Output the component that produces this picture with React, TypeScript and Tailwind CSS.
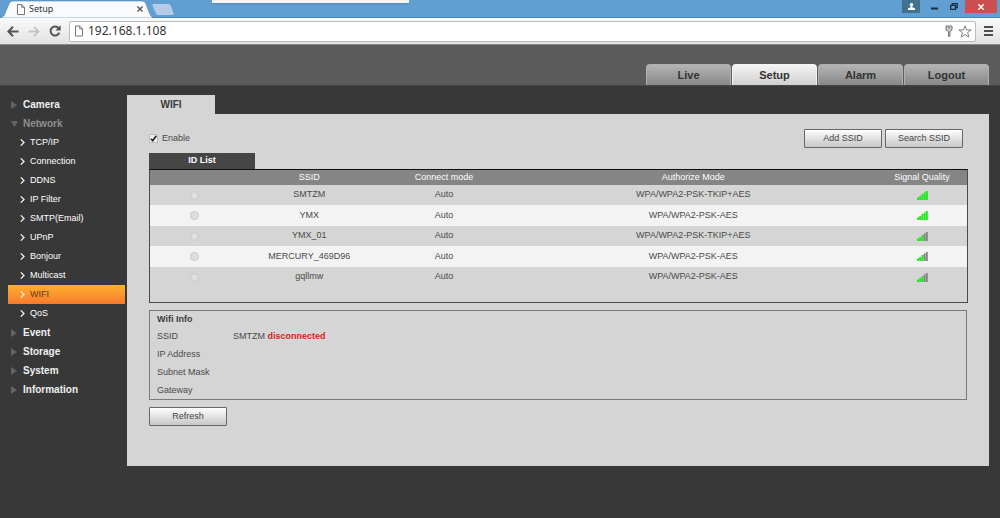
import { useState } from 'react';

const networkItems = ['TCP/IP', 'Connection', 'DDNS', 'IP Filter', 'SMTP(Email)', 'UPnP', 'Bonjour', 'Multicast', 'WIFI', 'QoS'];

const accessPoints = [
  { ssid: 'SMTZM', mode: 'Auto', auth: 'WPA/WPA2-PSK-TKIP+AES', signal: 5 },
  { ssid: 'YMX', mode: 'Auto', auth: 'WPA/WPA2-PSK-AES', signal: 5 },
  { ssid: 'YMX_01', mode: 'Auto', auth: 'WPA/WPA2-PSK-TKIP+AES', signal: 3 },
  { ssid: 'MERCURY_469D96', mode: 'Auto', auth: 'WPA/WPA2-PSK-AES', signal: 3 },
  { ssid: 'gqllmw', mode: 'Auto', auth: 'WPA/WPA2-PSK-AES', signal: 3 },
];

const PageIcon = ({ className }: { className: string }) => (
  <svg className={className} viewBox="0 0 8 11" fill="#fff" stroke="#777" strokeWidth="1">
    <path d="M.5.5h4.2l2.8 2.8v7.2h-7z" />
    <path d="M4.7.5v2.8h2.8" fill="none" />
  </svg>
);

const SignalBars = ({ level }: { level: number }) => (
  <svg className="mx-auto h-[9px] w-[11px]" viewBox="0 0 11 9" role="img" aria-label={`${level} of 5`}>
    {[2.5, 4, 6, 7.5, 9].map((h, i) => (
      <rect key={i} x={i * 2.2} y={9 - h} width="2" height={h} fill={i < level ? '#1fe81f' : '#858585'} />
    ))}
  </svg>
);

const BrowserChrome = () => (
  <div className="font-['Noto_Sans',sans-serif]">
    <div className="relative flex h-[18px] items-start justify-between border-b border-[#4d86b5] bg-[#619fd2]">
      <div className="flex h-[18px]">
        <div className="relative flex h-[18px] w-[152px] items-center pl-[17px]">
          <svg className="absolute inset-0 h-[18px] w-[153px]" viewBox="0 0 153 18">
            <path d="M0 18C4 17 5 14 6 11L9 4Q10 1 13 1H142Q145 1 146 4L149 12Q151 17 153 18Z" fill="#f9fafc" stroke="#4f86b3" strokeWidth=".6" />
          </svg>
          <PageIcon className="relative h-[11px] w-[8px]" />
          <span className="relative ml-1 flex-1 text-[9px] leading-[18px] text-[#333]">Setup</span>
          <button aria-label="Close tab" className="relative mr-[9px]">
            <svg className="h-[6px] w-[6px]" viewBox="0 0 6 6" stroke="#555" strokeWidth="1.4">
              <path d="M.5.5l5 5M5.5.5l-5 5" />
            </svg>
          </button>
        </div>
        <button aria-label="New tab" className="mt-1 h-[11px]">
          <svg className="h-[11px] w-[22px]" viewBox="0 0 22 11">
            <path d="M1.5 0H16Q18 0 19 2L21.5 9.5Q22 11 20.5 11H6.5Q4.5 11 4 9.5L.5 1.5Q0 0 1.5 0Z" fill="#b5cce6" />
          </svg>
        </button>
      </div>
      <div className="absolute left-[212px] top-0 h-[3px] w-[197px] bg-[#f4f4f4] shadow-sm" />
      <div className="flex h-[13px] items-start pr-[3px]">
        <button aria-label="Profile" className="flex h-[13px] w-[18px] items-center justify-center bg-[#42708f]">
          <svg className="h-[7px] w-[7px]" viewBox="0 0 7 7" fill="#fff">
            <circle cx="3.5" cy="1.8" r="1.8" />
            <path d="M2.8 3h1.4v1.3L7 5.3V7H0V5.3l2.8-1z" />
          </svg>
        </button>
        <button aria-label="Minimize" className="ml-[11px] pt-[7px]">
          <svg className="h-[3px] w-[7px]" viewBox="0 0 7 3"><path d="M0 .5h7v2H0z" fill="#142f45" /></svg>
        </button>
        <button aria-label="Restore" className="ml-3 pt-[3px]">
          <svg className="h-[7px] w-[8px]" viewBox="0 0 8 7" fill="none" stroke="#142f45" strokeWidth="1.3">
            <path d="M.7 2.3h4.8v4H.7zM2.3 2V.7h5v4H6" />
          </svg>
        </button>
        <button aria-label="Close" className="ml-[7px] flex h-[13px] w-[32px] items-center justify-center bg-[#cb4f50]">
          <svg className="h-[6px] w-[6px]" viewBox="0 0 6 6" stroke="#fff" strokeWidth="1.5"><path d="M.3.3l5.4 5.4M5.7.3L.3 5.7" /></svg>
        </button>
      </div>
    </div>
    <div className="flex h-[27px] items-center border-b border-[#8a8a8a] bg-linear-to-b from-[#f9fafc] to-[#e2e2e2] pl-[7px] pr-[7px]">
      <button aria-label="Back">
        <svg className="h-[11px] w-[12px]" viewBox="0 0 12 11" fill="none" stroke="#555" strokeWidth="2"><path d="M11.5 5.5H1.5M6 .8L1.4 5.5 6 10.2" /></svg>
      </button>
      <button aria-label="Forward" className="ml-[9px]">
        <svg className="h-[11px] w-[12px]" viewBox="0 0 12 11" fill="none" stroke="#c4c4c4" strokeWidth="1.8"><path d="M.5 5.5h10M6 .8l4.6 4.7L6 10.2" /></svg>
      </button>
      <button aria-label="Reload" className="ml-[9px]">
        <svg className="h-[12px] w-[12px]" viewBox="0 0 12 12">
          <path d="M9.7 3.3A4.5 4.5 0 1 0 10.3 7.6" fill="none" stroke="#555" strokeWidth="2" />
          <path d="M11.7 .3V5.6H6.4z" fill="#555" />
        </svg>
      </button>
      <div className="ml-2 flex h-[21px] flex-1 items-center rounded-[2px] border border-[#b9bbbd] bg-white pl-[5px] pr-[3px]">
        <PageIcon className="h-[12px] w-[8px]" />
        <input
          aria-label="Address"
          defaultValue="192.168.1.108"
          className="ml-[5px] min-w-0 flex-1 bg-transparent text-[12px] leading-[18px] text-[#333] outline-none"
        />
        <svg className="h-[12px] w-[8px]" viewBox="0 0 8 12" fill="#ccc" stroke="#777">
          <path d="M1 1h6v4L5 6.5v4.8H3.5V6.5L1 5z" />
          <path d="M3 2.8h2" />
        </svg>
        <button aria-label="Bookmark" className="ml-[5px]">
          <svg className="h-[13px] w-[14px]" viewBox="0 0 14 13" fill="#fff" stroke="#808080">
            <path d="M7 .9l1.6 4h4.6L9.6 7.6l1.3 4.5L7 9.5l-3.9 2.6 1.3-4.5L.8 4.9h4.6z" />
          </svg>
        </button>
      </div>
      <button aria-label="Menu" className="ml-2">
        <svg className="h-[10px] w-[9px]" viewBox="0 0 9 10" fill="#4d4d4d"><path d="M0 0h9v2H0zM0 4h9v2H0zM0 8h9v2H0z" /></svg>
      </button>
    </div>
  </div>
);

const MenuHeading = ({ label, open = false }: { label: string; open?: boolean }) => (
  <button className={`flex h-[19px] w-full items-center gap-[5px] pl-[3px] text-left text-[10px] font-bold ${open ? 'text-[#8f8f8f]' : 'text-[#f0f0f0]'}`}>
    <svg className="h-[8px] w-[7px]" viewBox="0 0 7 8" fill="#636363">
      {open ? <path d="M0 1h7L3.5 7z" /> : <path d="M0 0l6 4-6 4z" />}
    </svg>
    {label}
  </button>
);

const PanelButton = ({ label }: { label: string }) => (
  <button className="h-[19px] w-[78px] rounded-[1px] border border-[#666] bg-linear-to-b from-white to-[#c6c6c6] text-[9px] text-[#444]">
    {label}
  </button>
);

export default function App() {
  const [enabled, setEnabled] = useState(true);

  return (
    <div className="flex min-h-screen flex-col bg-[#383838] font-['Liberation_Sans',Arial,sans-serif] text-[9px]">
      <BrowserChrome />

      <header className="flex h-[41px] items-end justify-end border-b border-[#474747] bg-[#5b5b5b] pr-[11px]">
        <nav className="flex gap-px">
          {['Live', 'Setup', 'Alarm', 'Logout'].map(tab => (
            <a
              key={tab}
              href="#"
              className={`flex h-[21px] w-[85px] items-center justify-center rounded-t-[4px] border border-b-0 text-[11px] font-bold text-[#333] ${tab === 'Setup' ? 'border-[#f4f4f4] bg-linear-to-b from-[#f4f4f4] to-[#cfcfcf]' : 'border-[#b0b0b0] bg-linear-to-b from-[#b4b4b4] to-[#888]'}`}
            >
              {tab}
            </a>
          ))}
        </nav>
      </header>

      <div className="flex flex-1 items-start pt-[9px]">
        {/* Sidebar */}
        <aside className="w-[127px] shrink-0 pl-2 pr-0.5">
          <MenuHeading label="Camera" />
          <MenuHeading label="Network" open />
          {networkItems.map(item => (
            <a
              key={item}
              href="#"
              className={`flex h-[19px] items-center gap-[5px] pl-3 ${item === 'WIFI' ? 'bg-linear-to-b from-[#ffb02f] to-[#f5792d] text-[#5a3a1c]' : 'text-white'}`}
            >
              <svg className="h-[7px] w-[5px]" viewBox="0 0 5 7" fill="none" stroke="#f0f0f0" strokeWidth="1.3">
                <path d="M.8.4L4 3.5.8 6.6" />
              </svg>
              {item}
            </a>
          ))}
          <MenuHeading label="Event" />
          <MenuHeading label="Storage" />
          <MenuHeading label="System" />
          <MenuHeading label="Information" />
        </aside>

        {/* Content */}
        <main className="mr-[11px] min-w-0 flex-1 text-[#4a4a4a]">
          <h1 className="flex h-[19px] w-[88px] items-center justify-center bg-[#d5d5d5] text-[10px] font-bold text-[#3a3a3a]">WIFI</h1>
          <section className="bg-[#d5d5d5] pb-10 pl-[22px] pr-[21px] pt-[15px]">
            <div className="flex h-[19px] items-center justify-between pr-[5px]">
              <label className="flex items-center gap-1">
                <span className="relative flex h-[9px] w-[9px]">
                  <input
                    type="checkbox"
                    checked={enabled}
                    onChange={e => setEnabled(e.target.checked)}
                    className="h-[9px] w-[9px] appearance-none rounded-[1px] border border-[#bbb] bg-[#eee]"
                  />
                  {enabled && (
                    <svg className="pointer-events-none absolute inset-0 h-[9px] w-[9px]" viewBox="0 0 9 9" fill="none" stroke="#222" strokeWidth="1.7">
                      <path d="M2 4.7l1.7 2L7.3 1.8" />
                    </svg>
                  )}
                </span>
                Enable
              </label>
              <div className="flex gap-[3px]">
                <PanelButton label="Add SSID" />
                <PanelButton label="Search SSID" />
              </div>
            </div>

            <h2 className="mt-[5px] flex h-4 w-[106px] items-center justify-center bg-[#464646] font-bold text-white">ID List</h2>
            <div className="border border-[#4a4a4a] border-t-[#111] pb-[15px]">
              <table className="w-full table-fixed text-center">
                <thead>
                  <tr className="h-[15px] bg-[#858585] text-white">
                    <th className="w-[11%] p-0" aria-label="Select"></th>
                    <th className="w-[17%] p-0 font-normal">SSID</th>
                    <th className="w-[16%] p-0 font-normal">Connect mode</th>
                    <th className="w-[45%] p-0 font-normal">Authorize Mode</th>
                    <th className="w-[11%] p-0 font-normal">Signal Quality</th>
                  </tr>
                </thead>
                <tbody>
                  {accessPoints.map(ap => (
                    <tr key={ap.ssid} className="h-5 even:h-[21px] even:bg-[#f3f3f3]">
                      <td className="p-0">
                        <input
                          type="radio"
                          name="ssid"
                          disabled
                          aria-label={ap.ssid}
                          className="mx-auto block h-[9px] w-[9px] appearance-none rounded-full border border-[#c8c8c8] bg-[#dedede]"
                        />
                      </td>
                      <td className="p-0">{ap.ssid}</td>
                      <td className="p-0">{ap.mode}</td>
                      <td className="p-0">{ap.auth}</td>
                      <td className="p-0"><SignalBars level={ap.signal} /></td>
                    </tr>
                  ))}
                </tbody>
              </table>
            </div>

            <div className="mr-px mt-[7px] border border-[#7a7a7a] pl-[7px]">
              <h3 className="h-4 font-bold leading-4 text-[#3a3a3a]">Wifi Info</h3>
              <dl className="grid grid-cols-[76px_1fr] leading-[18px]">
                <dt>SSID</dt>
                <dd>SMTZM <strong className="text-[#e01b1b]">disconnected</strong></dd>
                <dt className="col-span-2">IP Address</dt>
                <dt className="col-span-2">Subnet Mask</dt>
                <dt className="col-span-2">Gateway</dt>
              </dl>
            </div>

            <div className="mt-[7px] flex">
              <PanelButton label="Refresh" />
            </div>
          </section>
        </main>
      </div>
    </div>
  );
}
